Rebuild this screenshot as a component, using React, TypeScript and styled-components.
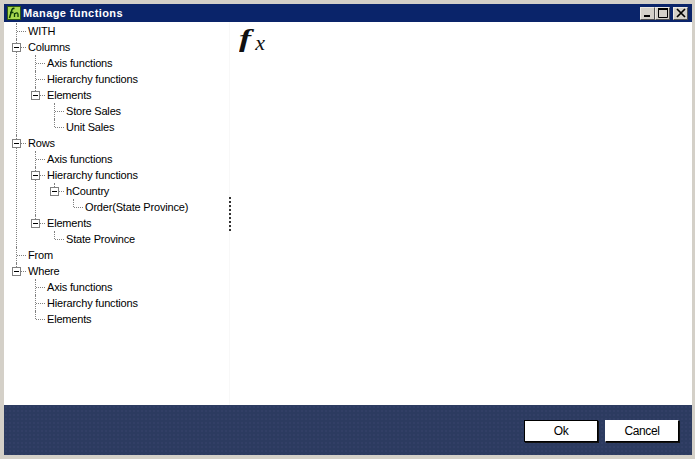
import { createGlobalStyle, styled } from 'styled-components';
import { FC } from 'react';

interface INode {
	label: string;
	children?: INode[];
}

const treeData: INode[] = [
	{ label: 'WITH' },
	{
		label: 'Columns',
		children: [
			{ label: 'Axis functions' },
			{ label: 'Hierarchy functions' },
			{ label: 'Elements', children: [{ label: 'Store Sales' }, { label: 'Unit Sales' }] },
		],
	},
	{
		label: 'Rows',
		children: [
			{ label: 'Axis functions' },
			{
				label: 'Hierarchy functions',
				children: [{ label: 'hCountry', children: [{ label: 'Order(State Province)' }] }],
			},
			{ label: 'Elements', children: [{ label: 'State Province' }] },
		],
	},
	{ label: 'From' },
	{
		label: 'Where',
		children: [{ label: 'Axis functions' }, { label: 'Hierarchy functions' }, { label: 'Elements' }],
	},
];

const TreeBranch: FC<{ nodes: INode[]; nested?: boolean }> = ({ nodes, nested }) => (
	<Branch $nested={nested}>
		{nodes.map((node) => (
			<Item key={node.label}>
				{node.children && <Toggle />}
				<Label>{node.label}</Label>
				{node.children && <TreeBranch nodes={node.children} nested />}
			</Item>
		))}
	</Branch>
);

const App = () => {
	return (
		<>
			<GlobalStyle />
			<Window>
				<TitleBar>
					<AppIcon>
						<svg width="14" height="14" viewBox="0 0 14 14">
							<rect x="0.5" y="0.5" width="13" height="13" fill="#a8d850" stroke="#2f5a10" />
							<path d="M2.5 12 L5 3.5 Q5.5 2 7.5 2.5 M3 6.5 H6.5" fill="none" stroke="#0c3a08" strokeWidth="1.5" />
							<path d="M7.5 11 V7 M7.5 8 Q11 5.5 11 8.5 V11" fill="none" stroke="#0c3a08" strokeWidth="1.3" />
						</svg>
					</AppIcon>
					<Title>Manage functions</Title>
					<Caption>
						<CaptionButton aria-label="Minimize">
							<svg width="10" height="10" viewBox="0 0 10 10">
								<rect x="1" y="7" width="6" height="2" fill="#000" />
							</svg>
						</CaptionButton>
						<CaptionButton aria-label="Maximize">
							<svg width="10" height="10" viewBox="0 0 10 10">
								<path d="M0.5 1.5 H9.5 V9.5 H0.5 Z" fill="none" stroke="#000" />
								<rect x="0" y="0" width="10" height="2" fill="#000" />
							</svg>
						</CaptionButton>
						<CaptionButton $close aria-label="Close">
							<svg width="10" height="10" viewBox="0 0 10 10">
								<path d="M1 1 L9 9 M9 1 L1 9" stroke="#000" strokeWidth="1.7" />
							</svg>
						</CaptionButton>
					</Caption>
				</TitleBar>
				<Body>
					<TreePane>
						<TreeBranch nodes={treeData} />
						<Splitter />
					</TreePane>
					<DetailPane>
						<Formula>
							<FormulaF>f</FormulaF>
							<FormulaX>x</FormulaX>
						</Formula>
					</DetailPane>
				</Body>
				<Footer>
					<DialogButton $primary>Ok</DialogButton>
					<DialogButton>Cancel</DialogButton>
				</Footer>
			</Window>
		</>
	);
};

const GlobalStyle = createGlobalStyle`
	html, body {
		margin: 0;
		padding: 0;
		background: #d4d0c8;
	}
`;

const Window = styled.div`
	box-sizing: border-box;
	display: flex;
	flex-direction: column;
	width: 695px;
	height: 459px;
	padding: 4px 3px 4px 4px;
	background: #d4d0c8;
	font-family: 'Liberation Sans', Arial, sans-serif;
	font-size: 11px;
	letter-spacing: -0.18px;
	color: #000;
`;

const TitleBar = styled.div`
	display: flex;
	flex: none;
	align-items: center;
	height: 18px;
	background: #0a246a;
`;

const AppIcon = styled.div`
	display: flex;
	margin: 0 2px 0 3px;
`;

const Title = styled.div`
	flex: 1;
	font-size: 11px;
	font-weight: bold;
	letter-spacing: 0.4px;
	color: #fff;
`;

const Caption = styled.div`
	display: flex;
	margin-right: 4px;
`;

const CaptionButton = styled.div<{ $close?: boolean }>`
	box-sizing: border-box;
	display: flex;
	align-items: center;
	justify-content: center;
	width: 15px;
	height: 13px;
	margin-left: ${(p) => (p.$close ? '3px' : '0')};
	background: #d4d0c8;
	border: 1px solid;
	border-color: #ece9e2 #505050 #505050 #ece9e2;
`;

const Body = styled.div`
	display: flex;
	flex: 1;
	min-height: 0;
	background: #fff;
`;

const TreePane = styled.div`
	position: relative;
	box-sizing: border-box;
	flex: none;
	width: 226px;
	padding-top: 1px;
	border-right: 1px solid #f8f8f8;
`;

const Splitter = styled.div`
	position: absolute;
	top: 175px;
	right: -2px;
	width: 2px;
	height: 34px;
	background: repeating-linear-gradient(#333 0 2px, transparent 2px 4px);
`;

const Branch = styled.ul<{ $nested?: boolean }>`
	margin: 0 0 0 ${(p) => (p.$nested ? '-5px' : '0')};
	padding: 0;
	list-style: none;
`;

const Item = styled.li`
	position: relative;
	padding-left: 24px;

	&::before {
		content: '';
		position: absolute;
		top: 0;
		bottom: 0;
		left: 12px;
		border-left: 1px dotted #808080;
	}

	&:last-child::before {
		bottom: auto;
		height: 8px;
	}

	&::after {
		content: '';
		position: absolute;
		top: 8px;
		left: 13px;
		width: 9px;
		border-top: 1px dotted #808080;
	}
`;

const Toggle = styled.span`
	position: absolute;
	z-index: 1;
	top: 4px;
	left: 8px;
	box-sizing: border-box;
	width: 9px;
	height: 9px;
	border: 1px solid #808080;
	background: linear-gradient(#000, #000) center / 5px 1px no-repeat #fff;
`;

const Label = styled.div`
	position: relative;
	z-index: 1;
	height: 16px;
	line-height: 16px;
	white-space: nowrap;
`;

const DetailPane = styled.div`
	flex: 1;
	padding: 2px 0 0 9px;
`;

const Formula = styled.div`
	display: flex;
	align-items: baseline;
	font-family: 'Liberation Serif', 'Times New Roman', serif;
	font-style: italic;
	line-height: 30px;
	letter-spacing: 0;
	color: #111;
`;

const FormulaF = styled.span`
	display: inline-block;
	font-size: 25px;
	font-weight: bold;
	transform: scaleX(1.45);
	transform-origin: left;
`;

const FormulaX = styled.span`
	margin: 0 0 0 8px;
	font-size: 22px;
	transform: translateY(3px);
`;

const Footer = styled.div`
	display: flex;
	flex: none;
	gap: 7px;
	align-items: flex-start;
	justify-content: flex-end;
	box-sizing: border-box;
	height: 50px;
	padding: 15px 13px 0 0;
	background-color: #2c3b60;
	background-image: radial-gradient(#323f66 1px, transparent 1px);
	background-size: 4px 4px;
`;

const DialogButton = styled.div<{ $primary?: boolean }>`
	box-sizing: border-box;
	width: 74px;
	height: 22px;
	line-height: 21px;
	font-size: 12px;
	letter-spacing: -0.4px;
	text-align: center;
	background: #fff;
	border: 1px solid ${(p) => (p.$primary ? '#000' : '#fff')};
	border-right-color: #000;
	border-bottom-color: #000;
	box-shadow: 1px 1px 0 #111;
`;

export default App;
